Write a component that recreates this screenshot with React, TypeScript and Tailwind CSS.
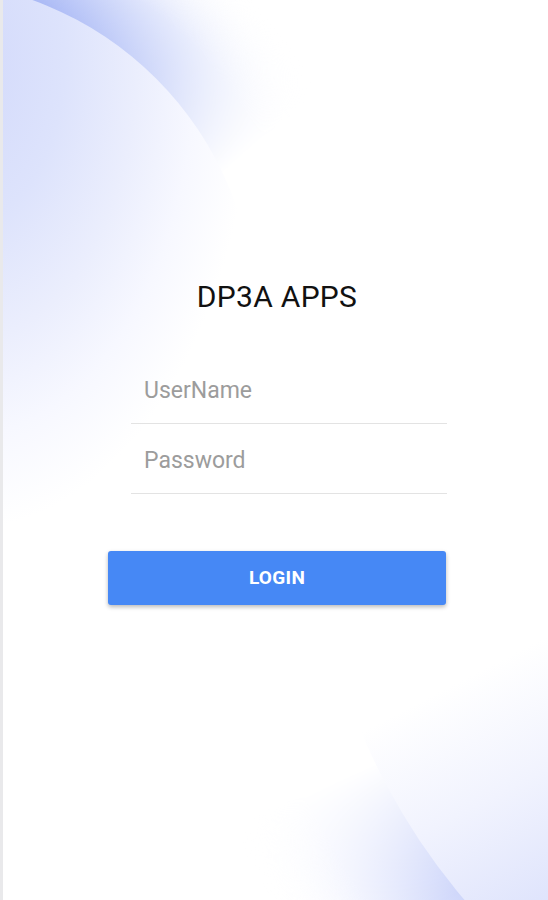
export default function App() {
  return (
    <div
      className="relative h-[900px] w-[548px] overflow-hidden border-l-[3px] border-[#e9e9eb] bg-white"
      style={{ fontFamily: "Roboto, 'Noto Sans', Arial, sans-serif" }}
    >
      <Backdrop />

      <div className="relative ml-[105px] w-[338px] pt-[279px]">
        <h1 className="text-center text-[30px] leading-[36px] tracking-[0.3px] text-[#111]">DP3A APPS</h1>

        <div className="mt-[39px] ml-[23px] w-[316px]">
          <div className="flex h-[70px] items-center border-b-[1.5px] border-[#e3e3e3] pt-[5px] pl-[13px] text-[23px] text-[#9c9c9c]">
            UserName
          </div>
          <div className="flex h-[70px] items-center border-b-[1.5px] border-[#e3e3e3] pt-[5px] pl-[13px] text-[23px] text-[#9c9c9c]">
            Password
          </div>
        </div>

        <button className="mt-[57px] flex h-[54px] w-[338px] items-center justify-center rounded-[3px] bg-[#4688f5] text-[19px] font-bold tracking-[0.3px] text-white shadow-[0_2px_4px_rgba(0,0,0,0.28)]">
          LOGIN
        </button>
      </div>
    </div>
  );
}

function Backdrop() {
  return (
    <svg className="pointer-events-none absolute inset-0" width="548" height="900" viewBox="0 0 548 900">
      <defs>
        {/* top-left arc: centre (-85, 317), r 337 */}
        <radialGradient
          id="tlFill"
          cx="0"
          cy="0"
          r="1"
          gradientUnits="userSpaceOnUse"
          gradientTransform="translate(-40 60) scale(290 470)"
        >
          <stop offset="0" stopColor="#d2d9fb" />
          <stop offset="0.35" stopColor="#dde3fc" />
          <stop offset="0.6" stopColor="#ebeefd" />
          <stop offset="0.8" stopColor="#f7f8ff" />
          <stop offset="1" stopColor="#ffffff" />
        </radialGradient>
        <radialGradient id="tlBand" cx="-85" cy="317" r="460" gradientUnits="userSpaceOnUse">
          <stop offset="0.72" stopColor="#a6b6f5" />
          <stop offset="0.84" stopColor="#d4dcfb" />
          <stop offset="1" stopColor="#ffffff" stopOpacity="0" />
        </radialGradient>
        <linearGradient id="tlFade" x1="40" y1="0" x2="200" y2="190" gradientUnits="userSpaceOnUse">
          <stop offset="0" stopColor="#fff" />
          <stop offset="0.5" stopColor="#fff" stopOpacity="0.55" />
          <stop offset="1" stopColor="#fff" stopOpacity="0" />
        </linearGradient>
        <mask id="tlMask">
          <rect width="548" height="900" fill="url(#tlFade)" />
        </mask>

        {/* bottom-right arc: centre (951, 483), r 643 */}
        <linearGradient id="brFill" x1="548" y1="900" x2="440" y2="690" gradientUnits="userSpaceOnUse">
          <stop offset="0" stopColor="#dfe4fc" />
          <stop offset="0.5" stopColor="#f1f3fe" />
          <stop offset="1" stopColor="#ffffff" />
        </linearGradient>
        <radialGradient id="brBand" cx="951" cy="483" r="800" gradientUnits="userSpaceOnUse">
          <stop offset="0.8" stopColor="#ced6fa" />
          <stop offset="0.9" stopColor="#eceffe" />
          <stop offset="1" stopColor="#ffffff" stopOpacity="0" />
        </radialGradient>
        <linearGradient id="brFade" x1="440" y1="900" x2="380" y2="760" gradientUnits="userSpaceOnUse">
          <stop offset="0" stopColor="#fff" />
          <stop offset="1" stopColor="#fff" stopOpacity="0" />
        </linearGradient>
        <mask id="brMask">
          <rect width="548" height="900" fill="url(#brFade)" />
        </mask>
      </defs>

      <circle cx="-85" cy="317" r="460" fill="url(#tlBand)" mask="url(#tlMask)" />
      <circle cx="-85" cy="317" r="337" fill="url(#tlFill)" />

      <circle cx="951" cy="483" r="800" fill="url(#brBand)" mask="url(#brMask)" />
      <circle cx="951" cy="483" r="643" fill="url(#brFill)" />
    </svg>
  );
}
